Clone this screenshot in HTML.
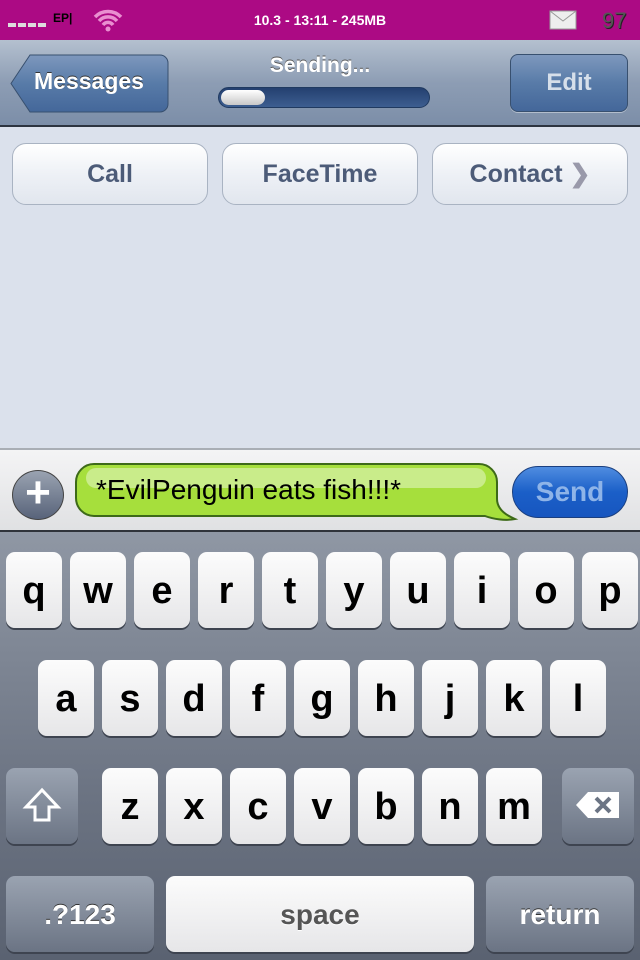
<!DOCTYPE html>
<html><head><style>
*{margin:0;padding:0;box-sizing:border-box}
body{width:640px;height:960px;overflow:hidden;background:#dbe1ec;font-family:"Liberation Sans",sans-serif;position:relative}
.a{position:absolute}
#sb{left:0;top:0;width:640px;height:40px;background:#ac0a84;color:#fff;font-weight:bold}
#nav{left:0;top:40px;width:640px;height:87px;background:linear-gradient(#b4c0cf,#8d9db4 50%,#7c8ea8);border-bottom:2px solid #2d3440}
.nb{background:linear-gradient(#7e98bd,#587ba8 50%,#44679a);border:1px solid #38506f;border-radius:8px;color:#fff;font-weight:bold;font-size:24px;text-align:center;box-shadow:0 1px 0 rgba(255,255,255,.4)}
.wb{top:143px;height:62px;background:linear-gradient(#fff,#eef1f6 50%,#e1e6ee);border:1px solid #a9b3c2;border-radius:14px;color:#4c5b78;font-weight:bold;font-size:25px;text-align:center;line-height:60px}
#ib{left:0;top:448px;width:640px;height:84px;background:linear-gradient(#f4f4f5,#e0e1e3);border-top:2px solid #a9aeb5;border-bottom:2px solid #2f333a}
#kb{left:0;top:532px;width:640px;height:428px;background:linear-gradient(#8f97a4,#6c7483 60%,#5a6271)}
.k{width:56px;height:76px;background:linear-gradient(#fcfcfc,#e6e6e8);border-radius:9px;box-shadow:0 2px 0 #3e4450;text-align:center;font-size:38px;font-weight:bold;line-height:78px;color:#000}
.d{background:linear-gradient(#9aa3b1,#6b7484);color:#fff;font-size:28px;text-shadow:0 -1px 0 #333}
</style></head><body>
<div id="sb" class="a">
 <div class="a" style="left:8px;top:22px;width:38px;height:5px;border-bottom:4px dashed #ddd"></div>
 <div class="a" style="left:53px;top:11px;font-size:12px;color:#000">EP|</div>
 <svg class="a" style="left:92px;top:7px" width="32" height="26" viewBox="0 0 32 26"><path d="M3 10a18 18 0 0 1 26 0M7 14a12 12 0 0 1 18 0M11 18a6 6 0 0 1 10 0" stroke="#e98fd0" stroke-width="3.5" fill="none"/><circle cx="16" cy="22" r="2.5" fill="#e98fd0"/></svg>
 <div class="a" style="left:0;width:640px;top:12px;text-align:center;font-size:14px">10.3 - 13:11 - 245MB</div>
 <svg class="a" style="left:549px;top:10px" width="28" height="20"><rect x="1" y="1" width="26" height="18" fill="#eee" stroke="#999"/><path d="M1 1l13 10 13-10" stroke="#999" fill="none"/></svg>
 <div class="a" style="left:602px;top:8px;font-size:22px;color:#555;font-weight:normal;text-shadow:1px 1px 0 #222">97</div>
</div>
<div id="nav" class="a">
 <svg class="a" style="left:10px;top:14px" width="160" height="60"><defs><linearGradient id="g" x1="0" y1="0" x2="0" y2="1"><stop offset="0" stop-color="#7e98bd"/><stop offset=".5" stop-color="#587ba8"/><stop offset="1" stop-color="#44679a"/></linearGradient></defs><path d="M20 1H150a8 8 0 0 1 8 8V50a8 8 0 0 1-8 8H20L1 29.5Z" fill="url(#g)" stroke="#38506f"/></svg>
 <div class="a" style="left:34px;top:28px;color:#fff;font-weight:bold;font-size:23px;text-shadow:0 -1px 0 #333">Messages</div>
 <div class="a" style="left:0;width:640px;top:14px;text-align:center;color:#fff;font-weight:bold;font-size:21px;text-shadow:0 -1px 0 #555">Sending...</div>
 <div class="a" style="left:218px;top:47px;width:212px;height:21px;border-radius:11px;background:linear-gradient(#244070,#3d5e90);border:1px solid #203a60"></div>
 <div class="a" style="left:221px;top:50px;width:44px;height:15px;border-radius:8px;background:linear-gradient(#fff,#c8c8c8)"></div>
 <div class="a nb" style="left:510px;top:14px;width:118px;height:58px;line-height:56px;color:#d6dfea">Edit</div>
</div>
<div class="a wb" style="left:12px;width:196px">Call</div>
<div class="a wb" style="left:222px;width:196px">FaceTime</div>
<div class="a wb" style="left:432px;width:196px">Contact <span style="color:#99a">&#x276F;</span></div>
<div id="ib" class="a">
 <div class="a" style="left:12px;top:20px;width:52px;height:50px;border-radius:50%;background:linear-gradient(#9aa3b1,#58637a);border:1px solid #444;color:#fff;font-size:44px;line-height:44px;text-align:center;font-weight:bold">+</div>
 <svg class="a" style="left:74px;top:13px" width="446" height="60"><path d="M20 1H405a18 18 0 0 1 18 18V36c0 8 6 15 18 20c-10 2-22 0-30-3H20a18 18 0 0 1-18-18V19A18 18 0 0 1 20 1Z" fill="#a6df3c" stroke="#3d6a18" stroke-width="2"/><rect x="12" y="5" width="400" height="20" rx="10" fill="#fff" opacity=".4"/></svg>
 <div class="a" style="left:96px;top:24px;font-size:28px;color:#000">*EvilPenguin eats fish!!!*</div>
 <div class="a" style="left:512px;top:16px;width:116px;height:52px;border-radius:26px;background:linear-gradient(#4f8de0,#1b5fc8 50%,#1756bf);border:1px solid #1a3f7f;color:#8eb4e8;font-weight:bold;font-size:28px;text-align:center;line-height:50px">Send</div>
</div>
<div id="kb" class="a"></div>
<div class="a k" style="left:6px;top:552px">q</div><div class="a k" style="left:70px;top:552px">w</div><div class="a k" style="left:134px;top:552px">e</div><div class="a k" style="left:198px;top:552px">r</div><div class="a k" style="left:262px;top:552px">t</div><div class="a k" style="left:326px;top:552px">y</div><div class="a k" style="left:390px;top:552px">u</div><div class="a k" style="left:454px;top:552px">i</div><div class="a k" style="left:518px;top:552px">o</div><div class="a k" style="left:582px;top:552px">p</div>
<div class="a k" style="left:38px;top:660px">a</div><div class="a k" style="left:102px;top:660px">s</div><div class="a k" style="left:166px;top:660px">d</div><div class="a k" style="left:230px;top:660px">f</div><div class="a k" style="left:294px;top:660px">g</div><div class="a k" style="left:358px;top:660px">h</div><div class="a k" style="left:422px;top:660px">j</div><div class="a k" style="left:486px;top:660px">k</div><div class="a k" style="left:550px;top:660px">l</div>
<div class="a k d" style="left:6px;top:768px;width:72px"><svg width="40" height="40" style="margin-top:18px" viewBox="0 0 40 40"><path d="M20 4L4 21h9v13h14V21h9Z" fill="none" stroke="#fff" stroke-width="3"/></svg></div>
<div class="a k" style="left:102px;top:768px">z</div><div class="a k" style="left:166px;top:768px">x</div><div class="a k" style="left:230px;top:768px">c</div><div class="a k" style="left:294px;top:768px">v</div><div class="a k" style="left:358px;top:768px">b</div><div class="a k" style="left:422px;top:768px">n</div><div class="a k" style="left:486px;top:768px">m</div>
<div class="a k d" style="left:562px;top:768px;width:72px"><svg width="48" height="30" style="margin-top:22px" viewBox="0 0 48 30"><path d="M14 2H45V28H14L2 15Z" fill="#fff"/><path d="M22 8l14 14M36 8L22 22" stroke="#6b7484" stroke-width="4"/></svg></div>
<div class="a k d" style="left:6px;top:876px;width:148px">.?123</div>
<div class="a k" style="left:166px;top:876px;width:308px;font-size:28px;color:#555;text-shadow:0 1px 0 #fff">space</div>
<div class="a k d" style="left:486px;top:876px;width:148px">return</div>
</body></html>
